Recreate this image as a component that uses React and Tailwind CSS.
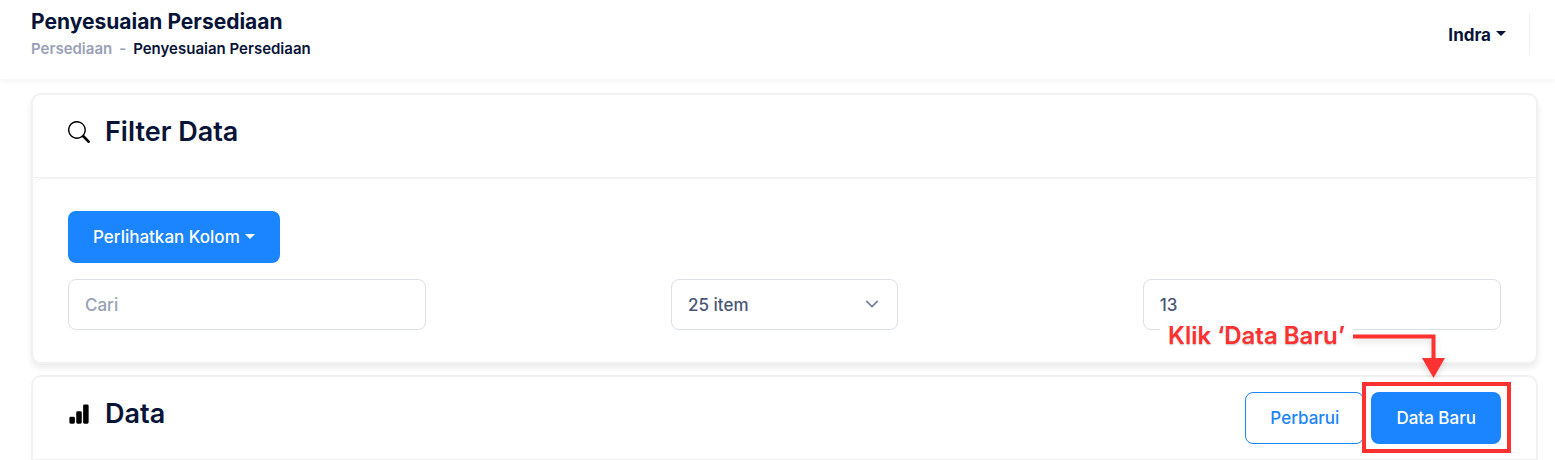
import React, { useState } from "react";
import { BsSearch, BsBarChartFill } from "react-icons/bs";

const Caret = ({ className }) => (
  <svg
    className={`w-[10px] h-[5px] ${className}`}
    viewBox="0 0 10 5"
    fill="currentColor"
  >
    <path d="M0 0h10L5 5z" />
  </svg>
);

const CardHeader = ({ icon, title, children }) => (
  <div className="flex items-start justify-between min-h-[83px] px-[35px] pt-[15px] border-b border-[#f1f1f2]">
    <div className="flex items-center gap-[15px] mt-[5px]">
      {icon}
      <h2 className="text-[27px] leading-[34px] font-semibold text-[#071437]">
        {title}
      </h2>
    </div>
    {children}
  </div>
);

// Guia para el boton de datos nuevos
const Guide = () => (
  <div className="absolute -top-[10px] -bottom-[9px] -left-[9px] -right-[10px] border-4 border-[#ff3131] pointer-events-none">
    <div className="absolute bottom-[71px] right-[62px] flex items-start">
      <p className="bg-white px-2 mb-[18px] text-[24px] leading-8 font-semibold text-[#ff3131] whitespace-nowrap text-shadow-sm">
        Klik ‘Data Baru’
      </p>
      <svg
        className="w-[92px] h-[46px] mt-3 drop-shadow-md overflow-visible"
        viewBox="0 0 92 46"
      >
        <path d="M0 4.500h80.500V28" fill="none" stroke="#ff3131" strokeWidth="4" />
        <path d="M69 26h23L80.500 46z" fill="#ff3131" />
      </svg>
    </div>
  </div>
);

const App = () => {
  const [search, setSearch] = useState("");
  const [items, setItems] = useState("25");
  const [total, setTotal] = useState("13");

  return (
    <div className="min-h-screen bg-white font-['Inter',sans-serif] text-[#071437]">
      {/* Barra superior */}
      <header className="flex items-start justify-between h-[79px] pl-[31px] pr-[25px] bg-white shadow-[0_3px_4px_0_rgba(0,0,0,0.04)]">
        <div className="pt-2">
          <h1 className="text-[21px] leading-[27px] font-bold">
            Penyesuaian Persediaan
          </h1>
          <nav className="flex gap-[7px] pt-[3px] text-[15px] leading-[21px] font-semibold">
            <a href="#persediaan" className="text-[#99a1b7]">
              Persediaan
            </a>
            <span className="text-[#99a1b7]">-</span>
            <span>Penyesuaian Persediaan</span>
          </nav>
        </div>
        <div className="flex items-center h-[42px] mt-[13px] pt-[3px] pr-[23px] border-r border-[#f1f1f4]">
          <button className="flex items-center gap-[5px] text-[17px] font-bold">
            Indra
            <Caret className="mb-1" />
          </button>
        </div>
      </header>

      <main className="pl-[31px] pr-[17px] pt-[14px]">
        {/* Filtros */}
        <section className="rounded-[10px] border-2 border-[#f1f1f2] bg-white shadow-[0_4px_6px_0_rgba(0,0,0,0.08)]">
          <CardHeader
            icon={<BsSearch className="text-[22px] text-black" />}
            title="Filter Data"
          />
          <div className="rounded-t-[10px] border-t border-[#f1f1f2] px-[35px] py-8">
            <button className="flex items-center justify-center gap-[5px] h-[52px] px-[25px] pt-px rounded-lg bg-[#1b84ff] text-[17px] font-medium text-white">
              Perlihatkan Kolom
              <Caret className="mb-[2px]" />
            </button>
            <div className="flex items-center justify-between mt-4 text-[17px] font-medium text-[#4b5675]">
              <input
                type="text"
                aria-label="Cari"
                placeholder="Cari"
                value={search}
                onChange={(e) => setSearch(e.target.value)}
                className="w-1/4 h-[51px] px-4 rounded-lg border border-[#dbdfe9] bg-white placeholder:text-[#99a1b7]"
              />
              <div className="relative w-[227px]">
                <select
                  aria-label="Jumlah item"
                  value={items}
                  onChange={(e) => setItems(e.target.value)}
                  className="block w-full h-[51px] px-4 pt-[2px] rounded-lg border border-[#dbdfe9] bg-white appearance-none"
                >
                  <option value="10">10 item</option>
                  <option value="25">25 item</option>
                  <option value="50">50 item</option>
                </select>
                <svg
                  className="absolute right-[19px] top-[18px] w-[14px] h-[14px] pointer-events-none"
                  viewBox="0 0 16 16"
                  fill="none"
                  stroke="#78829d"
                  strokeWidth="2"
                  strokeLinecap="round"
                  strokeLinejoin="round"
                >
                  <path d="M2 5l6 6 6-6" />
                </svg>
              </div>
              <input
                type="text"
                aria-label="Total"
                value={total}
                onChange={(e) => setTotal(e.target.value)}
                className="w-1/4 h-[51px] px-4 rounded-lg border border-[#dbdfe9] bg-white"
              />
            </div>
          </div>
        </section>

        {/* Datos */}
        <section className="mt-[11px] rounded-t-[10px] border-2 border-b-0 border-[#f1f1f2] bg-white">
          <CardHeader
            icon={<BsBarChartFill className="text-[22px] text-black" />}
            title="Data"
          >
            <div className="flex gap-[7px] text-[17px] font-medium">
              <button className="h-[52px] px-6 pt-px rounded-lg border border-[#1b84ff] bg-white text-[#1b84ff]">
                Perbarui
              </button>
              <div className="relative">
                <button className="h-[52px] px-[25px] pt-px rounded-lg bg-[#1b84ff] text-white">
                  Data Baru
                </button>
                <Guide />
              </div>
            </div>
          </CardHeader>
        </section>
      </main>
    </div>
  );
};

export default App;
